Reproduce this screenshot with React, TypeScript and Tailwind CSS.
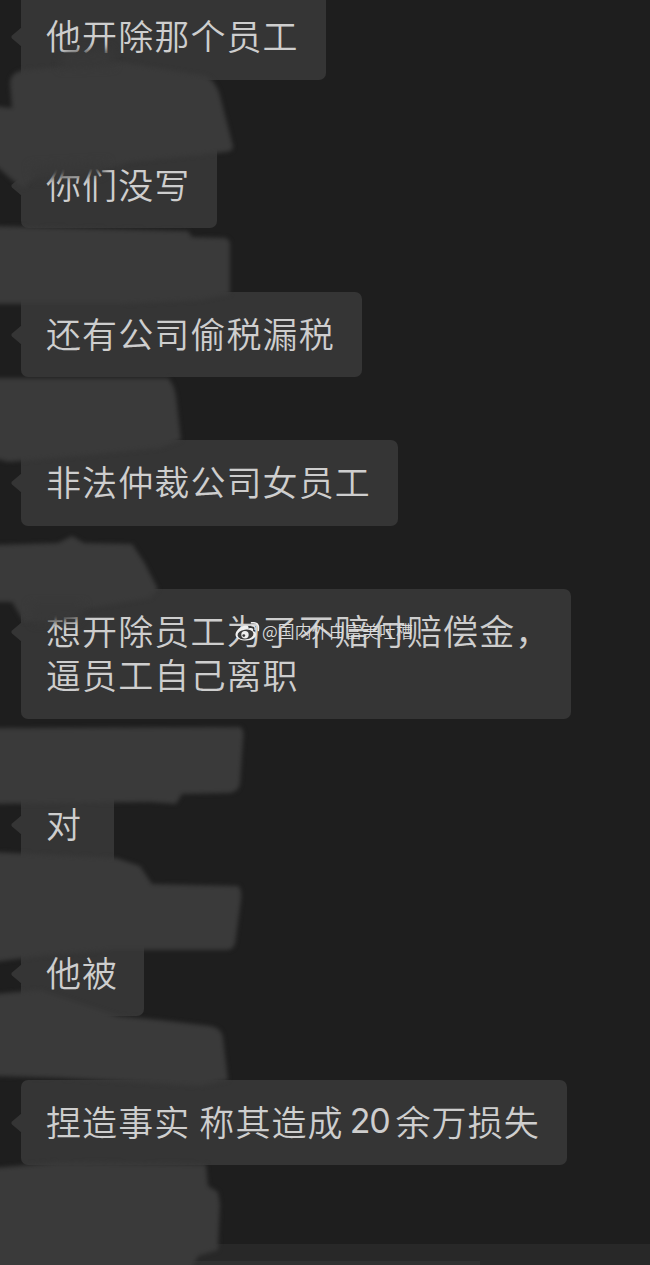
type Message = {
  lines: string[]
  size: string
}

const messages: Message[] = [
  { lines: ['他开除那个员工'], size: 'w-[305px] h-[85.5px]' },
  { lines: ['你们没写'], size: 'w-[196px] h-[85.5px]' },
  { lines: ['还有公司偷税漏税'], size: 'w-[341px] h-[85.5px]' },
  { lines: ['非法仲裁公司女员工'], size: 'w-[377px] h-[85.5px]' },
  { lines: ['想开除员工为了不赔付赔偿金，', '逼员工自己离职'], size: 'w-[550px] h-[129.5px]' },
  { lines: ['对'], size: 'w-[93px] h-[85.5px]' },
  { lines: ['他被'], size: 'w-[123px] h-[85.5px]' },
  { lines: ['捏造事实 称其造成', '20', '余万损失'], size: 'w-[546px] h-[85.5px]' },
]

// brush strokes that hide the sender names
const strokes = [
  'M10 84 Q10 72 24 70 L120 62 L206 76 Q214 80 219 92 L233 146 Q234 151 226 152 L130 162 L110 168 L40 173 L24 188 L12 180 L-6 164 L-6 106 L12 108 Z',
  'M-6 226 L188 231 L192 237 L226 238 L230 242 L230 294 L200 300 L120 304 L-6 304 Z',
  'M-6 378 L168 378 Q174 384 176 396 L181 440 L160 448 L100 454 L8 462 L-6 458 Z',
  'M-6 545 L58 543 L72 536 L84 543 L132 544 L144 562 L158 589 L150 598 L90 608 L60 617 L24 622 L12 602 L-6 602 Z',
  'M-6 728 L240 727 Q245 730 243 740 L240 784 Q238 792 230 793 L182 794 L176 804 L150 802 L-6 804 Z',
  'M-6 852 L116 858 L140 866 L152 884 L238 886 Q242 888 241 900 L235 944 Q233 950 226 950 L110 950 L40 956 L-6 962 Z',
  'M-6 994 L40 990 L118 1016 L160 1020 L210 1026 Q222 1028 223 1038 L228 1080 L200 1086 L60 1078 L-6 1076 Z',
  'M-6 1168 L60 1162 L206 1164 L208 1186 L218 1192 L220 1204 L218 1250 L198 1256 L190 1272 L-6 1272 Z',
]

// faint brush edges that run into the text
const smudges = [
  'M64 53 L110 49 L114 66 L60 68 Z',
  'M30 166 L108 162 L100 174 L34 179 Z',
  'M30 604 L84 604 L78 620 L34 623 Z',
]

function Tail() {
  return (
    <svg className="absolute top-[33px] -left-[11px] h-5 w-3" viewBox="0 0 12 20" fill="#353535">
      <path d="M12 0 L2 8.5 Q0.5 10 2 11.5 L12 20 Z" />
    </svg>
  )
}

function Bubble({ message }: { message: Message }) {
  const isSum = message.lines.length === 3

  return (
    <div className={`relative shrink-0 rounded-[7px] bg-[#353535] pt-[19px] pl-[25px] ${message.size}`}>
      <Tail />
      {isSum ? (
        <p className="flex">
          <span>{message.lines[0]}</span>
          <span className="mr-[6px] ml-[6px] font-['Inter'] text-[34px] font-normal tracking-[-1.2px]">
            {message.lines[1]}
          </span>
          <span>{message.lines[2]}</span>
        </p>
      ) : (
        message.lines.map((line) => <p key={line}>{line}</p>)
      )}
    </div>
  )
}

function WeiboIcon() {
  return (
    <svg className="h-[21px] w-[25px]" viewBox="0 0 25 21" fill="none" stroke="#f0f0f0">
      <path
        d="M10 4.500 C5 5.500 0.500 10 0.500 13.500 C0.500 17.500 6 19.500 11 19.500 C17 19.500 21 16.500 21 13.500 C21 11.500 20 10.500 18 10 C19 7.500 17 6.500 13.500 7.500 C14 5 12.500 4 10 4.500 Z"
        fill="#f0f0f0"
        stroke="none"
      />
      <ellipse cx="10.500" cy="13.500" rx="8" ry="4.900" fill="#3c3c3c" stroke="none" transform="rotate(-8 10.500 13.500)" />
      <circle cx="10" cy="13.800" r="3.700" fill="#f0f0f0" stroke="none" />
      <circle cx="8.800" cy="14.600" r="1.400" fill="#3c3c3c" stroke="none" />
      <path d="M17 5 Q20.500 4.500 20 8.500" strokeWidth="1.200" strokeLinecap="round" />
      <path d="M16.500 1.800 Q24.500 0.500 23.300 9.500" strokeWidth="1.500" strokeLinecap="round" />
    </svg>
  )
}

export default function App() {
  return (
    <main className="relative flex h-[1265px] w-[650px] flex-col justify-between overflow-hidden bg-[#1e1e1e] font-['Noto_Sans_CJK_SC',sans-serif] text-[35px] leading-[44px] font-[350] tracking-[1.1px] whitespace-nowrap text-[#cecece]">
      <div className="-mt-[6px] flex flex-col gap-[63.3px] pl-[21px]">
        {messages.map((message) => (
          <Bubble key={message.lines[0]} message={message} />
        ))}
      </div>
      <div className="flex h-[21px] shrink-0 flex-col justify-end bg-[#282828]">
        <div className="h-1 w-[480px] bg-[#303030]" />
      </div>

      <svg className="absolute inset-0 h-[1265px] w-[650px]" viewBox="0 0 650 1265" fill="#3a3a3a">
        <g className="blur-[2px]">
          {strokes.map((d) => (
            <path key={d} d={d} />
          ))}
        </g>
        <g className="blur-[4px]" fill="#383838">
          {smudges.map((d) => (
            <path key={d} d={d} />
          ))}
        </g>
      </svg>

      <div className="absolute top-[619px] left-[235px] flex items-center gap-[2px] text-[16.8px] leading-[24px] font-[350] text-[#dcdcdc]">
        <WeiboIcon />
        <span className="tracking-[0.1px]">@国内外白富美吐槽</span>
      </div>
    </main>
  )
}
